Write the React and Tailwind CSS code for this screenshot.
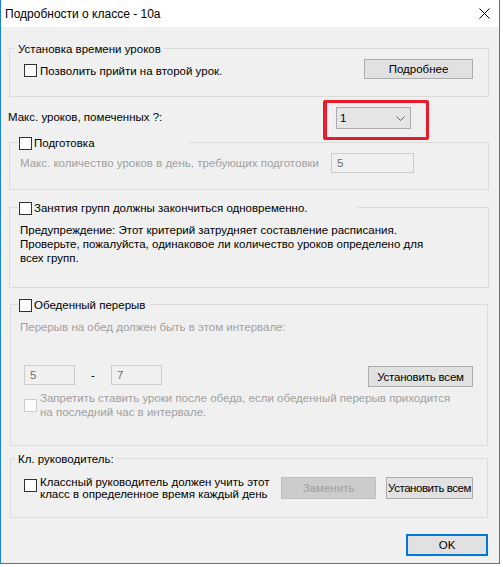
import React from "react";

function CB({ disabled }) {
  return disabled ? (
    <span className="block w-[13px] h-[13px] shrink-0 border border-[#cccccc] bg-[#fcfcfc]" />
  ) : (
    <span className="block w-[13px] h-[13px] shrink-0 border border-[#333333] bg-white" />
  );
}

function Btn({ className, children }) {
  return (
    <div
      className={
        "flex items-center justify-center whitespace-nowrap overflow-hidden border border-[#adadad] bg-[#e1e1e1] text-black " +
        className
      }
    >
      {children}
    </div>
  );
}

function Input({ className, value }) {
  return (
    <div
      className={
        "flex items-center h-[20px] border border-[#cccccc] bg-[#f0f0f0] pl-[5px] text-[#6d6d6d] " +
        className
      }
    >
      {value}
    </div>
  );
}

export default function App() {
  return (
    <div className="w-[503px] h-[567px] bg-white font-['Liberation_Sans',Arial,sans-serif] text-[11.5px] text-black leading-[14px]">
      <div className="relative w-[500px] h-[564px] border-x border-b border-[#1883d7] flex flex-col">
        {/* Title bar */}
        <div className="h-[27px] shrink-0 bg-white flex items-center justify-between pl-[4px] pr-[9px]">
          <span className="pt-[1px] text-[12px]">Подробности о классе - 10а</span>
          <svg width="11" height="11" viewBox="0 0 11 11" className="block">
            <path d="M0.5 0.5 L10.5 10.5 M10.5 0.5 L0.5 10.5" stroke="#000" strokeWidth="1" fill="none" />
          </svg>
        </div>

        {/* Content */}
        <div className="flex-1 bg-[#f0f0f0] flex flex-col">
          {/* Group 1 */}
          <div className="relative mt-[21px] ml-[8px] w-[480px] h-[49px] border border-[#dcdcdc]">
            <div className="absolute top-[-7px] left-[5px] h-[14px] flex items-center bg-[#f0f0f0] px-[3px] whitespace-nowrap">
              Установка времени уроков
            </div>
            <div className="flex items-start justify-between pl-[14px] pr-[15px] pt-[10px]">
              <div className="flex items-center h-[13px] gap-[3px] mt-[5px]">
                <CB />
                <span className="whitespace-nowrap">Позволить прийти на второй урок.</span>
              </div>
              <Btn className="w-[109px] h-[20px]">Подробнее</Btn>
            </div>
          </div>

          {/* Max lessons row */}
          <div className="mt-[10px] h-[22px] flex items-center justify-between pl-[7px] pr-[88px]">
            <span className="whitespace-nowrap mt-[-2px]">Макс. уроков, помеченных ?:</span>
            <div className="w-[75px] h-[22px] border border-[#acacac] bg-[#e5e5e5] flex items-center justify-between pl-[3px] pr-[5px]">
              <span>1</span>
              <svg width="9" height="5" viewBox="0 0 9 5" className="block">
                <path d="M0.5 0.5 L4.5 4.5 L8.5 0.5" stroke="#606060" strokeWidth="1" fill="none" />
              </svg>
            </div>
          </div>

          {/* Group 2 */}
          <div className="relative mt-[13px] ml-[8px] w-[480px] h-[48px] border border-[#dcdcdc]">
            <div className="absolute top-[-7px] left-[8px] w-[171px] h-[14px] flex items-center gap-[2px] bg-[#f0f0f0] pl-[1px] whitespace-nowrap">
              <CB />
              <span>Подготовка</span>
            </div>
            <div className="flex items-center justify-between pl-[10px] pr-[74px] mt-[10px] h-[20px]">
              <span className="text-[#a0a0a0] whitespace-nowrap">
                Макс. количество уроков в день, требующих подготовки
              </span>
              <Input className="w-[83px]" value="5" />
            </div>
          </div>

          {/* Group 3 */}
          <div className="relative mt-[17px] ml-[8px] w-[480px] h-[81px] border border-[#dcdcdc]">
            <div className="absolute top-[-7px] left-[8px] w-[339px] h-[14px] flex items-center gap-[2px] bg-[#f0f0f0] pl-[1px] whitespace-nowrap">
              <CB />
              <span>Занятия групп должны закончиться одновременно.</span>
            </div>
            <div className="pl-[10px] pt-[15px] leading-[14px]">
              Предупреждение: Этот критерий затрудняет составление расписания.
              <br />
              Проверьте, пожалуйста, одинаковое ли количество уроков определено для
              <br />
              всех групп.
            </div>
          </div>

          {/* Group 4 */}
          <div className="relative mt-[16px] ml-[9px] w-[478px] h-[142px] border border-[#dcdcdc]">
            <div className="absolute top-[-7px] left-[7px] w-[132px] h-[14px] flex items-center gap-[2px] bg-[#f0f0f0] pl-[1px] whitespace-nowrap">
              <CB />
              <span>Обеденный перерыв</span>
            </div>
            <div className="pl-[9px] pt-[15px] text-[#a0a0a0] whitespace-nowrap">
              Перерыв на обед должен быть в этом интервале:
            </div>
            <div className="mt-[31px] h-[22px] flex items-start pl-[13px] pr-[14px]">
              <Input className="w-[51px]" value="5" />
              <div className="w-[36px] h-[20px] flex items-center justify-center">-</div>
              <Input className="w-[51px]" value="7" />
              <Btn className="ml-auto mt-[1px] w-[105px] h-[21px] tracking-[-0.2px]">Установить всем</Btn>
            </div>
            <div className="mt-[4px] pl-[13px] flex items-center gap-[3px]">
              <CB disabled />
              <span className="text-[#a0a0a0] leading-[14px]">
                Запретить ставить уроки после обеда, если обеденный перерыв приходится
                <br />
                на последний час в интервале.
              </span>
            </div>
          </div>

          {/* Group 5 */}
          <div className="relative mt-[12px] ml-[9px] w-[478px] h-[60px] border border-[#dcdcdc]">
            <div className="absolute top-[-7px] left-[4px] h-[14px] flex items-center bg-[#f0f0f0] px-[3px] whitespace-nowrap">
              Кл. руководитель:
            </div>
            <div className="flex items-start pl-[13px] pr-[14px] pt-[17px]">
              <div className="flex items-start gap-[3px]">
                <span className="mt-[3px]">
                  <CB />
                </span>
                <span className="leading-[12px] whitespace-nowrap">
                  Классный руководитель должен учить этот
                  <br />
                  класс в определенное время каждый день
                </span>
              </div>
              <div className="ml-auto mt-[1px] w-[95px] h-[22px] flex items-center justify-center border border-[#bfbfbf] bg-[#cccccc] text-[#a0a0a0]">
                Заменить
              </div>
              <Btn className="ml-[10px] mt-[1px] w-[87px] h-[22px] tracking-[-0.45px]">Установить всем</Btn>
            </div>
          </div>

          {/* OK */}
          <div className="mt-[16px] self-end mr-[11px] w-[82px] h-[22px] flex items-center justify-center border-2 border-[#0078d7] bg-[#e1e1e1]">
            OK
          </div>
        </div>

        {/* Highlight annotation */}
        <div className="absolute left-[322px] top-[100px] w-[106px] h-[40px] border-[3px] border-l-[4px] border-[#e81c2a] rounded-[2px] pointer-events-none" />
      </div>
    </div>
  );
}
